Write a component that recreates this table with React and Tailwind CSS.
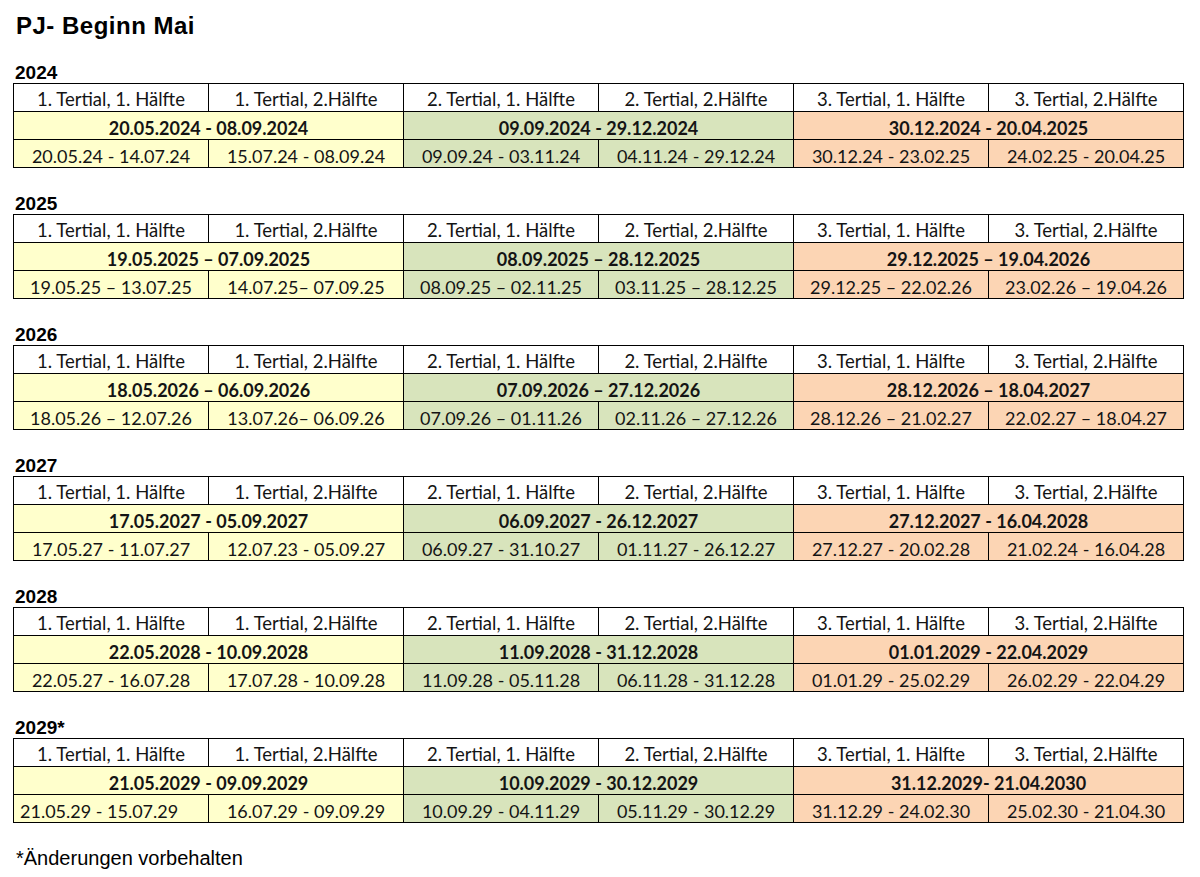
import React from "react";

const plans = [
  {
    year: "2024",
    tertials: [
      ["20.05.2024 - 08.09.2024", "20.05.24 - 14.07.24", "15.07.24 - 08.09.24"],
      ["09.09.2024 - 29.12.2024", "09.09.24 - 03.11.24", "04.11.24 - 29.12.24"],
      ["30.12.2024 - 20.04.2025", "30.12.24 - 23.02.25", "24.02.25 - 20.04.25"],
    ],
  },
  {
    year: "2025",
    tertials: [
      ["19.05.2025 – 07.09.2025", "19.05.25 – 13.07.25", "14.07.25– 07.09.25"],
      ["08.09.2025 – 28.12.2025", "08.09.25 – 02.11.25", "03.11.25 – 28.12.25"],
      ["29.12.2025 – 19.04.2026", "29.12.25 – 22.02.26", "23.02.26 – 19.04.26"],
    ],
  },
  {
    year: "2026",
    tertials: [
      ["18.05.2026 – 06.09.2026", "18.05.26 – 12.07.26", "13.07.26– 06.09.26"],
      ["07.09.2026 – 27.12.2026", "07.09.26 – 01.11.26", "02.11.26 – 27.12.26"],
      ["28.12.2026 – 18.04.2027", "28.12.26 – 21.02.27", "22.02.27 – 18.04.27"],
    ],
  },
  {
    year: "2027",
    tertials: [
      ["17.05.2027 - 05.09.2027", "17.05.27 - 11.07.27", "12.07.23 - 05.09.27"],
      ["06.09.2027 - 26.12.2027", "06.09.27 - 31.10.27", "01.11.27 - 26.12.27"],
      ["27.12.2027 - 16.04.2028", "27.12.27 - 20.02.28", "21.02.24 - 16.04.28"],
    ],
  },
  {
    year: "2028",
    tertials: [
      ["22.05.2028 - 10.09.2028", "22.05.27 - 16.07.28", "17.07.28 - 10.09.28"],
      ["11.09.2028 - 31.12.2028", "11.09.28 - 05.11.28", "06.11.28 - 31.12.28"],
      ["01.01.2029 - 22.04.2029", "01.01.29 - 25.02.29", "26.02.29 - 22.04.29"],
    ],
  },
  {
    year: "2029*",
    leftFirst: true,
    tertials: [
      ["21.05.2029 - 09.09.2029", "21.05.29 - 15.07.29", "16.07.29 - 09.09.29"],
      ["10.09.2029 - 30.12.2029", "10.09.29 - 04.11.29", "05.11.29 - 30.12.29"],
      ["31.12.2029- 21.04.2030", "31.12.29 - 24.02.30", "25.02.30 - 21.04.30"],
    ],
  },
];

const headers = [
  "1. Tertial, 1. Hälfte",
  "1. Tertial, 2.Hälfte",
  "2. Tertial, 1. Hälfte",
  "2. Tertial, 2.Hälfte",
  "3. Tertial, 1. Hälfte",
  "3. Tertial, 2.Hälfte",
];

// excel-ish fills per tertial
const fills = ["bg-[#ffffcc]", "bg-[#d8e4bc]", "bg-[#fcd5b4]"];

const cellClassName = "h-[28px] border border-black px-0 pt-[4px] pb-0 leading-none text-center align-middle";

const YearTable = ({ plan }) => (
  <table className="w-[1169px] table-fixed border-collapse text-[18px] text-[#141414] [font-family:Lato,'Noto_Sans',sans-serif]">
    <colgroup>
      {headers.map((header) => (
        <col key={header} className="w-[195px]" />
      ))}
    </colgroup>
    <tbody>
      <tr>
        {headers.map((header) => (
          <td key={header} className={`${cellClassName} text-[18.5px]`}>
            {header}
          </td>
        ))}
      </tr>
      <tr>
        {plan.tertials.map((tertial, i) => (
          <td key={tertial[0]} colSpan={2} className={`${cellClassName} ${fills[i]} font-bold`}>
            {tertial[0]}
          </td>
        ))}
      </tr>
      <tr>
        {plan.tertials.map((tertial, i) => (
          <React.Fragment key={tertial[1]}>
            <td className={`${cellClassName} ${fills[i]} ${plan.leftFirst && i === 0 ? "!text-left pl-[6px]" : ""}`}>
              {tertial[1]}
            </td>
            <td className={`${cellClassName} ${fills[i]}`}>{tertial[2]}</td>
          </React.Fragment>
        ))}
      </tr>
    </tbody>
  </table>
);

export default function App() {
  return (
    <div className="min-h-screen bg-white pl-[13px] pt-[12px] text-black [font-family:'Liberation_Sans',Arial,sans-serif]">
      <h1 className="h-[28px] pl-[3px] text-[24px] font-bold leading-[28px] tracking-[0.5px]">PJ- Beginn Mai</h1>

      <div className="mt-[22px]">
        {plans.map((plan, index) => (
          <section key={plan.year} className={index === 0 ? "" : "mt-[25px]"}>
            <h2 className="pl-[2px] text-[19px] font-bold leading-[21px]">{plan.year}</h2>
            <YearTable plan={plan} />
          </section>
        ))}
      </div>

      <p className="mt-[24px] pl-[3px] text-[20px] leading-[22px]">*Änderungen vorbehalten</p>
    </div>
  );
}
